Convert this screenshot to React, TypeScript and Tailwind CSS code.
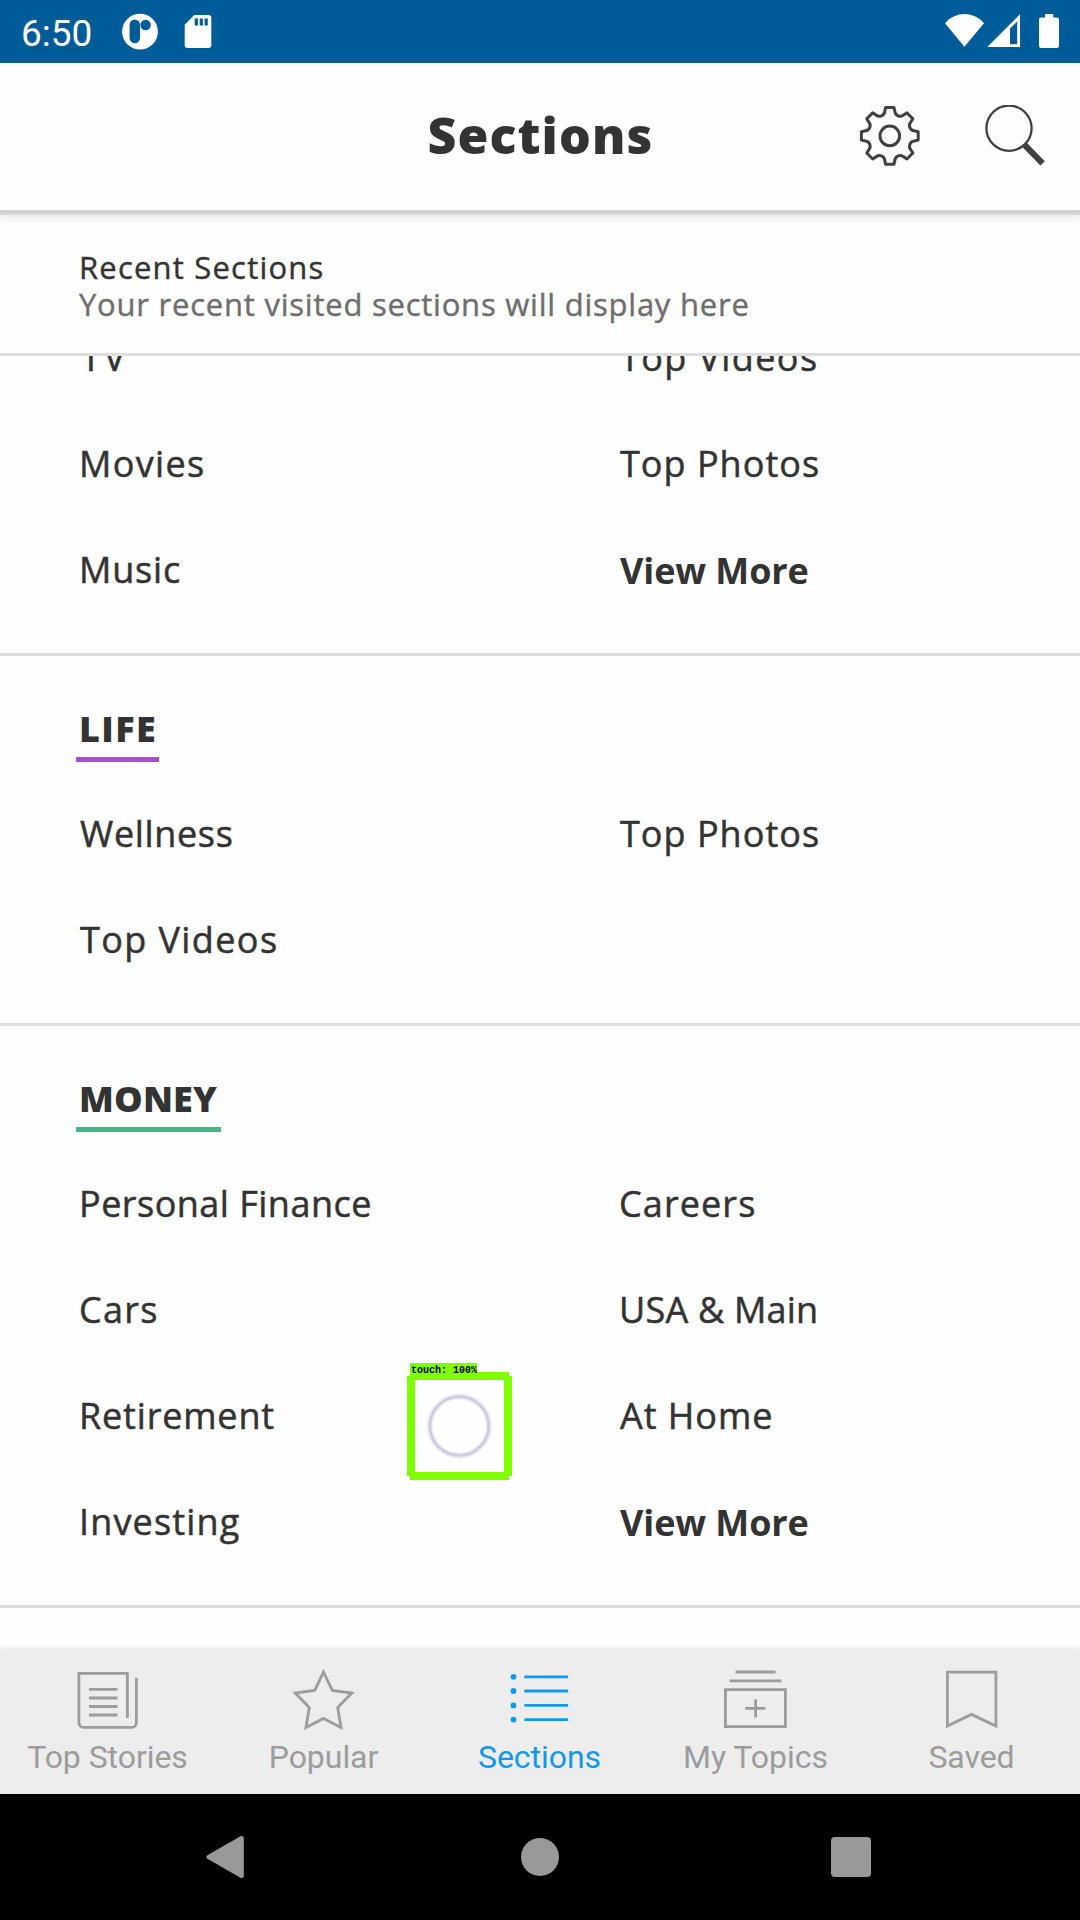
import type { ReactNode } from 'react';

type Link = { label: string; fit: string; bold?: boolean };
type Section = { title?: string; titleFit?: string; underline?: string; left: Link[]; right: Link[] };

const VIEW_MORE: Link = { label: 'View More', fit: 'pl-[1px] pt-[2px] tracking-[-0.1px]', bold: true };

const SECTIONS: Section[] = [
  {
    left: [
      { label: 'TV', fit: 'pl-[2px] tracking-[3px]' },
      { label: 'Movies', fit: 'tracking-[1.35px]' },
      { label: 'Music', fit: 'tracking-[0.8px]' },
    ],
    right: [
      { label: 'Top Videos', fit: 'pl-[1px] tracking-[1.4px]' },
      { label: 'Top Photos', fit: 'pl-[1px] tracking-[1.02px]' },
      VIEW_MORE,
    ],
  },
  {
    title: 'LIFE',
    titleFit: 'tracking-[1.4px]',
    underline: 'w-[83px] border-[#a84ddb]',
    left: [
      { label: 'Wellness', fit: 'pl-[1px] tracking-[0.65px]' },
      { label: 'Top Videos', fit: 'pl-[1px] tracking-[1.4px]' },
    ],
    right: [{ label: 'Top Photos', fit: 'pl-[1px] tracking-[1.02px]' }],
  },
  {
    title: 'MONEY',
    titleFit: 'tracking-[0.2px]',
    underline: 'w-[145px] border-[#3dba83]',
    left: [
      { label: 'Personal Finance', fit: 'tracking-[0.48px]' },
      { label: 'Cars', fit: 'tracking-[1.25px]' },
      { label: 'Retirement', fit: 'tracking-[0.82px]' },
      { label: 'Investing', fit: 'tracking-[1.15px]' },
    ],
    right: [
      { label: 'Careers', fit: 'tracking-[1.1px]' },
      { label: 'USA & Main', fit: 'tracking-[0.2px]' },
      { label: 'At Home', fit: 'pl-[1px] tracking-[0.95px]' },
      VIEW_MORE,
    ],
  },
];

function gearPath() {
  const spin = (x: number, y: number, a: number) => {
    const c = Math.cos(a);
    const s = Math.sin(a);
    return `${(x * c - y * s).toFixed(2)} ${(x * s + y * c).toFixed(2)}`;
  };
  let d = '';
  for (let i = 0; i < 8; i++) {
    const a = (i * Math.PI) / 4;
    d += `${i ? 'L' : 'M'}${spin(-4.2, -28.4, a)}L${spin(4.2, -28.4, a)}L${spin(5.1, -24.2, a)}`;
    d += `A5.3 5.3 0 0 0 ${spin(-5.1, -24.2, a + Math.PI / 4)}`;
  }
  return d + 'Z';
}

function StatusBar() {
  return (
    <div className="flex h-[63px] shrink-0 items-center justify-between bg-[#005c99] text-white">
      <div className="flex items-center">
        <span className="w-[122px] pt-[4px] pl-[21px] font-['Roboto',sans-serif] text-[37px] leading-none">6:50</span>
        <svg width="36" height="63" viewBox="122 0 36 63">
          <circle cx="140" cy="31.6" r="17.9" fill="#fff" />
          <rect x="129.6" y="19.6" width="10.4" height="23.6" rx="5.2" fill="#005c99" />
          <circle cx="145.6" cy="25" r="5.2" fill="#005c99" />
        </svg>
        <svg className="ml-[26px]" width="28" height="63" viewBox="184 0 28 63">
          <path d="M194.3 15H208.5a2.8 2.8 0 0 1 2.8 2.8V45.2a2.8 2.8 0 0 1-2.8 2.8H187.5a2.8 2.8 0 0 1-2.8-2.8V24.8Z" fill="#fff" />
          <path d="M194.7 18.5h3.2v7h-3.2zM199.7 18.5h3.2v7h-3.2zM204.6 18.5h3.2v7h-3.2z" fill="#005c99" />
        </svg>
      </div>
      <svg width="138" height="63" viewBox="942 0 138 63">
        <path d="M964.4 46.8 945 23.2C950 17.4 957 14 964.4 14S979 17.4 984 23.2Z" fill="#fff" />
        <path d="M987.3 47 1020 14.3V47ZM1010 44.2H1017.2V21.5L1010 28.6Z" fill="#fff" fillRule="evenodd" />
        <path d="M1045 14h8.2v3.4h3.6a2.2 2.2 0 0 1 2.2 2.2V45.8a2.2 2.2 0 0 1-2.2 2.2H1041.2a2.2 2.2 0 0 1-2.2-2.2V19.6a2.2 2.2 0 0 1 2.2-2.2H1045Z" fill="#fff" />
      </svg>
    </div>
  );
}

function Header() {
  return (
    <header className="relative z-10 grid h-[147px] shrink-0 grid-cols-[1fr_auto_1fr] items-center bg-[#fefefe] shadow-[0_4px_0_#d2d2d2,0_5px_1px_#dedede,0_7px_8px_rgba(0,0,0,0.12)]">
      <div />
      <h1 className="pb-[3px] pl-[1px] text-[50px] leading-none font-extrabold tracking-[1.1px]">Sections</h1>
      <div className="flex items-center gap-[60px] justify-self-end pr-[34px]">
        <svg width="64" height="64" viewBox="857.5 104.5 64 64" fill="none" stroke="#404040" strokeWidth="3" strokeLinejoin="round">
          <g transform="translate(889.3 135.4)">
            <path d={gearPath()} />
            <circle r="9.8" />
          </g>
        </svg>
        <svg width="64" height="64" viewBox="982 104.5 64 64" fill="none" stroke="#404040">
          <circle cx="1009" cy="127.7" r="22.6" strokeWidth="2.3" />
          <path d="M1024.8 144.6 1042.6 162.8" strokeWidth="6.2" />
        </svg>
      </div>
    </header>
  );
}

function Column({ items }: { items: Link[] }) {
  return (
    <ul>
      {items.map((l) => (
        <li key={l.label} className="flex h-[106px] items-center pt-[2px] text-[36px] leading-[48px]">
          <span className={`${l.fit} ${l.bold ? 'font-bold' : '[-webkit-text-stroke:0.5px_#333]'}`}>{l.label}</span>
        </li>
      ))}
    </ul>
  );
}

function SectionBlock({ s }: { s: Section }) {
  return (
    <section className="border-b-3 border-[#dedede] pb-[31px]">
      {s.title && (
        <div className="pt-12 pb-[18px] pl-[76px]">
          <h2 className={`h-[58px] border-b-5 pt-px pl-[3px] text-[36px] leading-[48px] font-extrabold ${s.titleFit} ${s.underline}`}>{s.title}</h2>
        </div>
      )}
      <div className="grid grid-cols-2 pl-[79px]">
        <div className="w-[540px]"><Column items={s.left} /></div>
        <div className="pl-[39.5px]"><Column items={s.right} /></div>
      </div>
    </section>
  );
}

function Tab({ label, active, children }: { label: string; active?: boolean; children: ReactNode }) {
  return (
    <div className={`flex flex-1 flex-col items-center ${active ? 'text-[#1098ee]' : 'text-[#9c9c9c]'}`}>
      <svg width="72" height="72" viewBox="0 0 72 72" fill="none" stroke="currentColor" strokeWidth="2.8" className="mt-[14px]">
        {children}
      </svg>
      <span className="mt-[2px] pr-px font-['Roboto',sans-serif] text-[32px] leading-[38px] tracking-[-0.05px]">{label}</span>
    </div>
  );
}

function TabBar() {
  return (
    <nav className="relative flex h-[144px] shrink-0 bg-[#ededed] shadow-[0_-3px_4px_#ededed]">
      <Tab label="Top Stories">
        <path d="M91.4 54V9.4H42.9V58.4a5 5 0 0 0 5 5H95.4a5 5 0 0 0 5-5V14" transform="translate(-36)" />
        <path d="M53 25.4H81.5M53 34H81.5M53 42.5H81.5M53 51H81.5" transform="translate(-36)" />
      </Tab>
      <Tab label="Popular">
        <path d="M35.5 8 44.3 26.4 63.8 29 49.7 43.4 53 63.4 35.5 54.4 18 63.4 21.3 43.4 7.3 29 26.8 26.4Z" />
      </Tab>
      <Tab label="Sections" active>
        <path d="M20.4 12.8H64M20.4 27H64M20.4 41.4H64M20.4 55.6H64" />
        <g fill="currentColor" stroke="none">
          <circle cx="9.5" cy="12.8" r="2.9" />
          <circle cx="9.5" cy="27" r="2.9" />
          <circle cx="9.5" cy="41.4" r="2.9" />
          <circle cx="9.5" cy="55.6" r="2.9" />
        </g>
      </Tab>
      <Tab label="My Topics">
        <path d="M15.6 8H55.5M9.7 16.8H61.4M5.4 25.7H65.4V62.6H5.4ZM25.2 44.4H45.5M35.6 35.2V53.6" />
      </Tab>
      <Tab label="Saved">
        <path d="M11.4 8.2H59.9V62L35.5 50.4 11.4 62Z" />
      </Tab>
    </nav>
  );
}

function SystemNav() {
  return (
    <div className="relative z-10 grid h-[126px] shrink-0 grid-cols-3 items-center bg-black text-[#999]">
      <svg className="ml-[204px]" width="44" height="48" viewBox="204 1833 44 48" fill="currentColor">
        <path d="M207.4 1855.2 240 1836.4C242 1835.3 243.8 1836 243.8 1838.2V1875.8C243.8 1878 242 1878.7 240 1877.6L207.4 1858.8C206 1858 206 1856 207.4 1855.2Z" />
      </svg>
      <div className="size-[38px] justify-self-center rounded-full bg-[#999]" />
      <div className="ml-[111px] size-[40px] rounded-[4px] bg-[#999]" />
    </div>
  );
}

function TouchMarker() {
  return (
    <div className="absolute top-[1363px] left-[407px] z-20">
      <div className="relative z-10 ml-[3px] h-[14px] w-[67px] bg-[#80ff00] pt-[1.5px] pl-[1px] font-['Liberation_Mono',monospace] text-[10px] leading-[12px] font-bold whitespace-pre text-black">touch: 100%</div>
      <svg className="-mt-[5px]" width="105" height="108" viewBox="0 0 105 108">
        <path d="M3 0H102V4H105V104H102V108H3V104H0V4H3ZM8 8V100H97V8Z" fill="#80ff00" fillRule="evenodd" />
        <circle cx="52.3" cy="54" r="29.6" fill="none" stroke="#eeecf6" strokeWidth="6" />
        <circle cx="52.3" cy="54" r="29.4" fill="none" stroke="#cfcce0" strokeWidth="2.8" />
      </svg>
    </div>
  );
}

export default function App() {
  return (
    <div className="relative flex h-[1920px] w-[1080px] flex-col overflow-hidden bg-[#fefefe] font-['Open_Sans',sans-serif] text-[#333]">
      <StatusBar />
      <Header />
      <div className="h-[146px] shrink-0 border-b-3 border-[#dedede] pt-[39px] pl-[79px] text-[31px] leading-[37px] [-webkit-text-stroke:0.4px_currentColor]">
        <p className="tracking-[1.2px]">Recent Sections</p>
        <p className="tracking-[0.77px] text-[#6e6e6e] [-webkit-text-stroke:0.4px_#6e6e6e]">Your recent visited sections will display here</p>
      </div>
      <main className="min-h-0 flex-1 overflow-hidden">
        <div className="-mt-[52px]">
          {SECTIONS.map((s, i) => (
            <SectionBlock key={i} s={s} />
          ))}
        </div>
      </main>
      <TabBar />
      <SystemNav />
      <TouchMarker />
    </div>
  );
}
